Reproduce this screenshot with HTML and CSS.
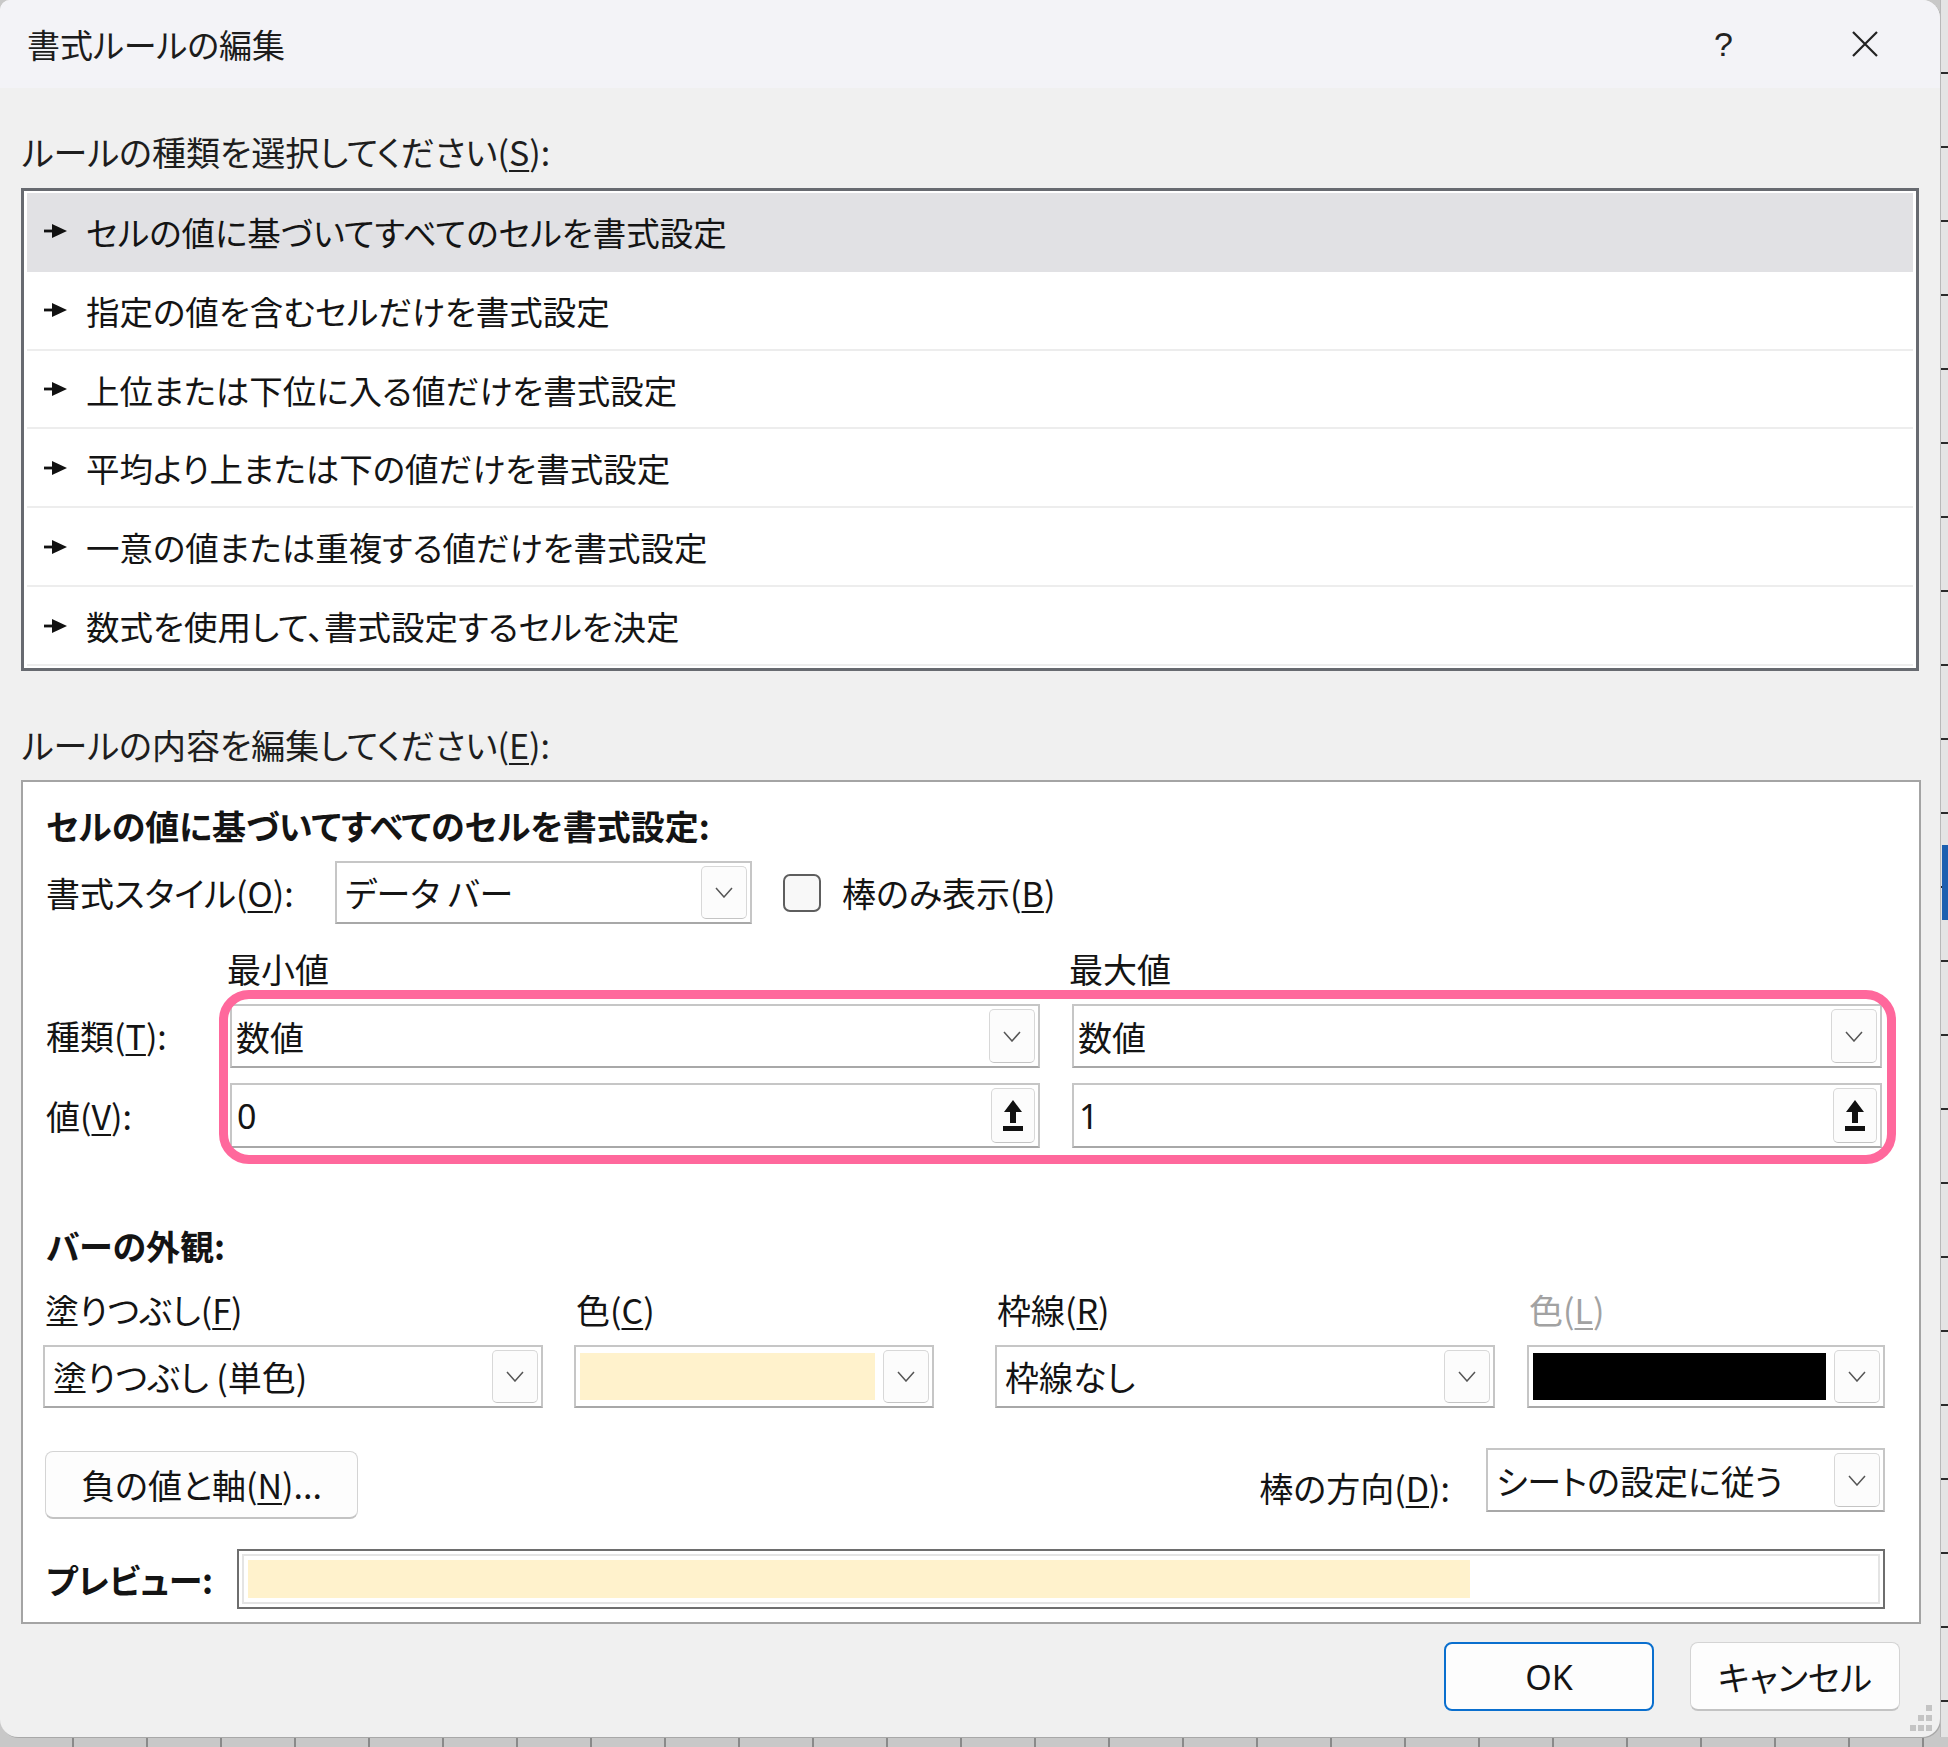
FILE: index.html
```html
<!DOCTYPE html>
<html lang="ja">
<head>
<meta charset="utf-8">
<title>書式ルールの編集</title>
<link rel="stylesheet" href="styles.css">
</head>
<body>
<div class="screen">
  <div class="dialog">
    <div class="titlebar">
      <span class="title">書式ルールの編集</span>
      <span class="help">?</span>
      <svg class="close" width="28" height="28" viewBox="0 0 28 28"><path d="M2 2 L26 26 M26 2 L2 26" stroke="#222" stroke-width="2.2" fill="none"/></svg>
    </div>
    <div class="main">
      <div class="section-label">ルールの種類を選択してください(<u>S</u>):</div>
      <div class="rule-list">
        <div class="rule selected"><svg class="bullet" width="24" height="16" viewBox="0 0 24 16"><rect x="0" y="6.6" width="10" height="2.8" fill="#111"/><polygon points="8,1 23,8 8,15" fill="#111"/></svg>セルの値に基づいてすべてのセルを書式設定</div>
        <div class="rule"><svg class="bullet" width="24" height="16" viewBox="0 0 24 16"><rect x="0" y="6.6" width="10" height="2.8" fill="#111"/><polygon points="8,1 23,8 8,15" fill="#111"/></svg>指定の値を含むセルだけを書式設定</div>
        <div class="rule"><svg class="bullet" width="24" height="16" viewBox="0 0 24 16"><rect x="0" y="6.6" width="10" height="2.8" fill="#111"/><polygon points="8,1 23,8 8,15" fill="#111"/></svg>上位または下位に入る値だけを書式設定</div>
        <div class="rule"><svg class="bullet" width="24" height="16" viewBox="0 0 24 16"><rect x="0" y="6.6" width="10" height="2.8" fill="#111"/><polygon points="8,1 23,8 8,15" fill="#111"/></svg>平均より上または下の値だけを書式設定</div>
        <div class="rule"><svg class="bullet" width="24" height="16" viewBox="0 0 24 16"><rect x="0" y="6.6" width="10" height="2.8" fill="#111"/><polygon points="8,1 23,8 8,15" fill="#111"/></svg>一意の値または重複する値だけを書式設定</div>
        <div class="rule"><svg class="bullet" width="24" height="16" viewBox="0 0 24 16"><rect x="0" y="6.6" width="10" height="2.8" fill="#111"/><polygon points="8,1 23,8 8,15" fill="#111"/></svg>数式を使用して、書式設定するセルを決定</div>
      </div>

      <div class="section-label second">ルールの内容を編集してください(<u>E</u>):</div>
      <div class="editor">
        <div class="heading">セルの値に基づいてすべてのセルを書式設定:</div>

        <div class="style-row">
          <span class="style-label">書式スタイル(<u>O</u>):</span>
          <div class="combo style-combo">
            <span class="combo-text">データ バー</span>
            <span class="drop"><svg width="18" height="11" viewBox="0 0 18 11"><path d="M1 1 L9 10 L17 1" stroke="#555" stroke-width="1.5" fill="none"/></svg></span>
          </div>
          <span class="check"></span>
          <span class="check-label">棒のみ表示(<u>B</u>)</span>
        </div>

        <div class="minmax">
          <span></span>
          <span class="col-head">最小値</span>
          <span class="col-head">最大値</span>

          <span class="row-label">種類(<u>T</u>):</span>
          <div class="combo">
            <span class="combo-text tight">数値</span>
            <span class="drop"><svg width="18" height="11" viewBox="0 0 18 11"><path d="M1 1 L9 10 L17 1" stroke="#555" stroke-width="1.5" fill="none"/></svg></span>
          </div>
          <div class="combo">
            <span class="combo-text tight">数値</span>
            <span class="drop"><svg width="18" height="11" viewBox="0 0 18 11"><path d="M1 1 L9 10 L17 1" stroke="#555" stroke-width="1.5" fill="none"/></svg></span>
          </div>

          <span class="row-label">値(<u>V</u>):</span>
          <div class="combo value-box">
            <span class="combo-text num">0</span>
            <span class="drop ref"><svg width="22" height="34" viewBox="0 0 22 34"><polygon points="11,1 20,13 14,13 14,24 8,24 8,13 2,13" fill="#111"/><rect x="1" y="27" width="20" height="5" fill="#111"/></svg></span>
          </div>
          <div class="combo value-box">
            <span class="combo-text num">1</span>
            <span class="drop ref"><svg width="22" height="34" viewBox="0 0 22 34"><polygon points="11,1 20,13 14,13 14,24 8,24 8,13 2,13" fill="#111"/><rect x="1" y="27" width="20" height="5" fill="#111"/></svg></span>
          </div>
        </div>

        <div class="highlight"></div>

        <div class="heading bar-heading">バーの外観:</div>

        <div class="appearance">
          <div class="field fill-field">
            <span class="field-label">塗りつぶし(<u>F</u>)</span>
            <div class="combo">
              <span class="combo-text">塗りつぶし (単色)</span>
              <span class="drop"><svg width="18" height="11" viewBox="0 0 18 11"><path d="M1 1 L9 10 L17 1" stroke="#555" stroke-width="1.5" fill="none"/></svg></span>
            </div>
          </div>
          <div class="field color-field">
            <span class="field-label">色(<u>C</u>)</span>
            <div class="combo">
              <span class="swatch swatch-yellow"></span>
              <span class="drop"><svg width="18" height="11" viewBox="0 0 18 11"><path d="M1 1 L9 10 L17 1" stroke="#555" stroke-width="1.5" fill="none"/></svg></span>
            </div>
          </div>
          <div class="field border-field">
            <span class="field-label">枠線(<u>R</u>)</span>
            <div class="combo">
              <span class="combo-text">枠線なし</span>
              <span class="drop"><svg width="18" height="11" viewBox="0 0 18 11"><path d="M1 1 L9 10 L17 1" stroke="#555" stroke-width="1.5" fill="none"/></svg></span>
            </div>
          </div>
          <div class="field bcolor-field">
            <span class="field-label disabled">色(<u>L</u>)</span>
            <div class="combo">
              <span class="swatch swatch-black"></span>
              <span class="drop"><svg width="18" height="11" viewBox="0 0 18 11"><path d="M1 1 L9 10 L17 1" stroke="#555" stroke-width="1.5" fill="none"/></svg></span>
            </div>
          </div>
        </div>

        <div class="neg-row">
          <span class="btn neg-btn">負の値と軸(<u>N</u>)...</span>
          <span class="spacer"></span>
          <span class="dir-label">棒の方向(<u>D</u>):</span>
          <div class="combo dir-combo">
            <span class="combo-text">シートの設定に従う</span>
            <span class="drop"><svg width="18" height="11" viewBox="0 0 18 11"><path d="M1 1 L9 10 L17 1" stroke="#555" stroke-width="1.5" fill="none"/></svg></span>
          </div>
        </div>

        <div class="preview-row">
          <span class="preview-label">プレビュー:</span>
          <div class="preview-box">
            <div class="preview-inner"><div class="preview-fill"></div></div>
          </div>
        </div>
      </div>

      <div class="footer">
        <span class="btn ok-btn">OK</span>
        <span class="btn cancel-btn">キャンセル</span>
      </div>
    </div>
    <svg class="grip" width="30" height="30" viewBox="0 0 30 30">
      <rect x="22" y="2" width="6" height="6" fill="#c4c4c4"/>
      <rect x="14" y="12" width="6" height="6" fill="#c4c4c4"/>
      <rect x="22" y="12" width="6" height="6" fill="#c4c4c4"/>
      <rect x="6" y="22" width="6" height="6" fill="#c4c4c4"/>
      <rect x="14" y="22" width="6" height="6" fill="#c4c4c4"/>
      <rect x="22" y="22" width="6" height="6" fill="#c4c4c4"/>
    </svg>
  </div>
  <div class="sheet-edge"><div class="sheet-sel"></div></div>
</div>
</body>
</html>
```

FILE: styles.css
```css
* { box-sizing: border-box; }

html, body {
  margin: 0;
  padding: 0;
}

body {
  width: 1948px;
  height: 1747px;
  overflow: hidden;
  background-color: #c8c8c8;
  background-image: repeating-linear-gradient(to right, #c8c8c8 0 72px, #8a8a8a 72px 74px);
  font-family: "Noto Sans CJK JP", "Noto Sans", sans-serif;
  font-feature-settings: "palt";
  color: #141414;
}

u {
  text-decoration-thickness: 2px;
  text-underline-offset: 4px;
}

.screen {
  display: flex;
  height: 1737px;
}

.dialog {
  position: relative;
  width: 1940px;
  height: 1737px;
  flex: none;
  display: flex;
  flex-direction: column;
  background: #f0f0f0;
  border-radius: 10px 18px 18px 18px;
  box-shadow: 1px 1px 0 #a8a8a8;
  overflow: hidden;
}

/* title bar */
.titlebar {
  height: 88px;
  flex: none;
  display: flex;
  align-items: center;
  background: #f3f3f7;
  padding-left: 27px;
}

.title {
  font-size: 33px;
  line-height: 40px;
  color: #1c1c1c;
}

.help {
  margin-left: auto;
  font-family: "Liberation Sans", sans-serif;
  font-size: 34px;
  line-height: 40px;
  color: #222;
  margin-right: 118px;
}

.close {
  margin-right: 61px;
}

/* main area */
.main {
  flex: 1;
  display: flex;
  flex-direction: column;
  padding: 0 19px 0 21px;
}

.section-label {
  font-size: 34px;
  line-height: 40px;
  margin-top: 44px;
  padding-left: 1px;
  color: #1e1e1e;
}

.section-label.second {
  margin-top: 54px;
}

.rule-list {
  margin-top: 16px;
  height: 483px;
  width: 1898px;
  border: 3px solid #676a70;
  background: #fff;
  padding: 2px 3px;
  display: flex;
  flex-direction: column;
}

.rule {
  flex: 1;
  display: flex;
  align-items: center;
  padding-left: 17px;
  font-size: 33.5px;
  border-bottom: 2px solid #ededed;
}

.rule.selected {
  background: #e1e1e4;
  border-bottom-color: #e1e1e4;
}

.bullet {
  margin-right: 18px;
  flex: none;
}

/* editor box */
.editor {
  position: relative;
  margin-top: 15px;
  height: 844px;
  width: 1900px;
  background: #fff;
  border: 2px solid #a4a4a4;
  padding: 0 34px 0 23px;
  display: flex;
  flex-direction: column;
  font-size: 34px;
}

.heading {
  margin-top: 24px;
  line-height: 40px;
  font-weight: bold;
  font-size: 34px;
}

.style-row {
  margin-top: 15px;
  height: 63px;
  display: flex;
  align-items: center;
}

.style-label {
  width: 289px;
  flex: none;
}

.combo {
  display: flex;
  align-items: center;
  height: 64px;
  background: #fff;
  border: 2px solid #c6c6c6;
  border-bottom-color: #a8a8a8;
  padding: 3px;
}

.combo-text {
  flex: 1;
  padding-left: 5px;
  white-space: nowrap;
  overflow: hidden;
}

.combo-text.tight {
  padding-left: 1px;
}

.combo-text.num {
  font-family: "Noto Sans", sans-serif;
  padding-left: 2px;
}

.drop {
  width: 46px;
  align-self: stretch;
  flex: none;
  border: 1px solid #d8d8d8;
  border-bottom-color: #c4c4c4;
  border-radius: 5px;
  background: #fcfcfc;
  display: flex;
  align-items: center;
  justify-content: center;
}

.style-combo {
  width: 417px;
  height: 63px;
}

.check {
  width: 38px;
  height: 38px;
  margin-left: 31px;
  border: 2px solid #5e5e5e;
  border-radius: 7px;
  background: #f8f8f8;
  flex: none;
}

.check-label {
  margin-left: 21px;
}

.minmax {
  margin-top: 25px;
  display: grid;
  grid-template-columns: 152px 810px 810px;
  grid-template-rows: 40px 64px 65px;
  column-gap: 32px;
  row-gap: 15px;
  align-items: center;
}

.col-head {
  line-height: 40px;
  margin-left: -3px;
}

.row-label {
  line-height: 40px;
  white-space: nowrap;
}

.value-box {
  height: 65px;
}

.drop.ref {
  width: 44px;
}

.highlight {
  position: absolute;
  left: 196px;
  top: 208px;
  width: 1677px;
  height: 174px;
  border: 9px solid #ff689c;
  border-radius: 30px;
  pointer-events: none;
}

.bar-heading {
  margin-top: 78px;
}

.appearance {
  margin-top: 24px;
  display: flex;
  margin-left: -3px;
}

.field {
  display: flex;
  flex-direction: column;
  gap: 15px;
  flex: none;
}

.field-label {
  line-height: 40px;
  padding-left: 2px;
}

.field-label.disabled {
  color: #a2a2a2;
}

.field .combo {
  height: 63px;
}

.fill-field { width: 500px; }
.color-field { width: 360px; margin-left: 31px; }
.border-field { width: 500px; margin-left: 61px; }
.bcolor-field { width: 358px; margin-left: 32px; }

.swatch {
  flex: 1;
  align-self: stretch;
  margin: 3px 8px 3px 1px;
}

.swatch-yellow { background: #fff2cc; }
.swatch-black { background: #000; }

.neg-row {
  margin-top: 40px;
  height: 71px;
  display: flex;
  align-items: center;
}

.btn {
  display: flex;
  align-items: center;
  justify-content: center;
  background: #fdfdfd;
  border: 1px solid #d4d4d4;
  border-bottom: 2px solid #c3c3c3;
  border-radius: 8px;
  font-size: 34px;
}

.neg-btn {
  width: 313px;
  height: 68px;
  align-self: flex-start;
  margin-top: 3px;
  margin-left: -1px;
}

.spacer { flex: 1; }

.dir-label {
  margin-right: 36px;
  margin-top: 8px;
}

.dir-combo {
  width: 399px;
  height: 64px;
  align-self: flex-start;
}

.preview-row {
  margin-top: 30px;
  height: 60px;
  display: flex;
  align-items: center;
}

.preview-label {
  width: 191px;
  flex: none;
  font-weight: bold;
}

.preview-box {
  width: 1648px;
  height: 60px;
  border: 2px solid #6e6e6e;
  padding: 3px;
  background: #fff;
}

.preview-inner {
  height: 100%;
  border: 2px solid #e4e4e4;
  padding: 4px;
}

.preview-fill {
  width: 1222px;
  height: 100%;
  background: #fff2cc;
}

.footer {
  margin-top: 18px;
  display: flex;
  justify-content: flex-end;
  gap: 36px;
  padding-right: 21px;
}

.ok-btn {
  width: 210px;
  height: 69px;
  border: 2px solid #0a6fce;
  font-family: "Noto Sans", sans-serif;
}

.cancel-btn {
  width: 210px;
  height: 69px;
}

.grip {
  position: absolute;
  right: 6px;
  bottom: 4px;
}

/* sliver of the worksheet behind the dialog */
.sheet-edge {
  flex: 1;
  position: relative;
  background-color: #e4e4e4;
  background-image: repeating-linear-gradient(to bottom, transparent 0 72px, #2a2a2a 72px 74px);
  border-left: 1px solid #b8b8b8;
}

.sheet-sel {
  position: absolute;
  left: 1px;
  right: 0;
  top: 845px;
  height: 75px;
  background: #1c5fb0;
}
```
